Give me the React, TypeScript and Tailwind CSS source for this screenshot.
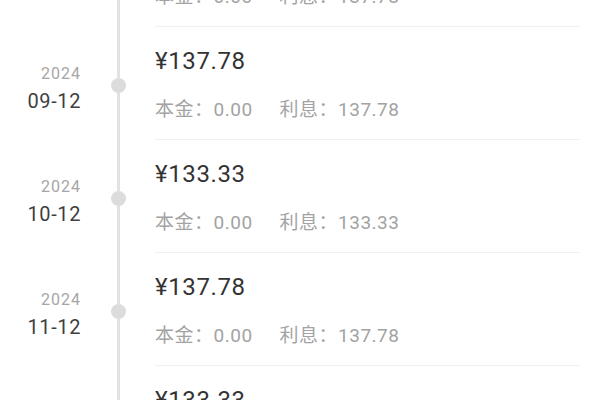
import React from "react";

type Row = { year: string; date: string; amount: string; principal: string; interest: string };

const rows: Row[] = [
  { year: "2024", date: "08-12", amount: "¥137.78", principal: "0.00", interest: "137.78" },
  { year: "2024", date: "09-12", amount: "¥137.78", principal: "0.00", interest: "137.78" },
  { year: "2024", date: "10-12", amount: "¥133.33", principal: "0.00", interest: "133.33" },
  { year: "2024", date: "11-12", amount: "¥137.78", principal: "0.00", interest: "137.78" },
  { year: "2024", date: "12-12", amount: "¥133.33", principal: "0.00", interest: "133.33" },
];

export default function App() {
  return (
    <div
      className="w-[600px] h-[400px] overflow-hidden bg-white"
      style={{ fontFamily: 'Roboto, "Noto Sans CJK SC", sans-serif' }}
    >
      <div className="-mt-[86px] flex flex-col pr-[20px]">
        {rows.map((r, i) => (
          <div key={i} className="flex h-[113px]">
            <div className="w-[81px] flex flex-col items-end pt-[37px]">
              <div className="text-[16px] leading-[20px] text-[#a6a6a6] tracking-[1px]">{r.year}</div>
              <div className="mt-[4px] text-[20px] leading-[26px] text-[#3f3f3f] tracking-[0.6px]">{r.date}</div>
            </div>
            <div className="w-[74px] flex flex-col items-center">
              <div className="w-[3px] h-[51px] bg-[#e2e2e2]" />
              <div className="w-[15px] h-[15px] rounded-full bg-[#dcdcdc]" />
              <div className="w-[3px] flex-1 bg-[#e2e2e2]" />
            </div>
            <div className="flex-1 border-b border-[#f0f0f0] flex flex-col pt-[18px]">
              <div className="text-[24px] leading-[32px] text-[#333] tracking-[0.6px]">{r.amount}</div>
              <div className="mt-[20px] text-[19px] leading-[26px] text-[#a3a3a3] tracking-[0.5px] flex">
                <span>本金：{r.principal}</span>
                <span className="ml-[27px]">利息：{r.interest}</span>
              </div>
            </div>
          </div>
        ))}
      </div>
    </div>
  );
}
